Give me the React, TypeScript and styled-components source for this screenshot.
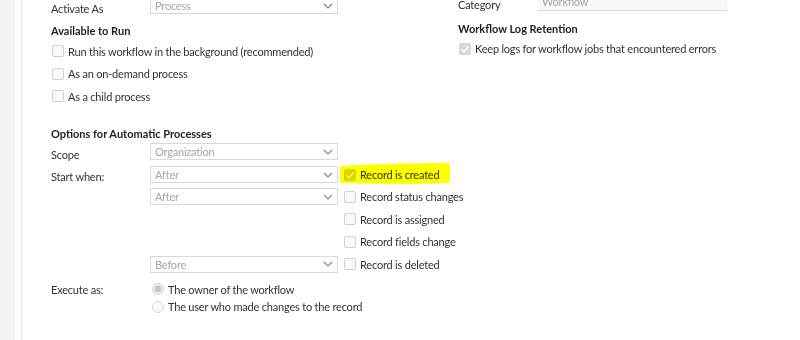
import React from 'react';
import styled, { createGlobalStyle } from 'styled-components';

const GlobalStyle = createGlobalStyle`
  html, body {
    margin: 0;
    padding: 0;
    background: #ffffff;
  }
  body {
    font-family: Lato, 'Open Sans', 'Liberation Sans', sans-serif;
    font-size: 11px;
    letter-spacing: -0.2px;
    color: #333333;
    white-space: nowrap;
    overflow: hidden;
  }
`;

const Chevron: React.FC = () => (
  <svg width="10" height="6" viewBox="0 0 10 6">
    <path d="M1 1 L5 5 L9 1" fill="none" stroke="#8a8a8a" strokeWidth="1.2" />
  </svg>
);

const Check: React.FC = () => (
  <svg width="10" height="10" viewBox="0 0 10 10">
    <path d="M1.5 5.2 L4 7.8 L8.7 2.2" fill="none" stroke="#ffffff" strokeWidth="1.6" />
  </svg>
);

const Select: React.FC<{ value: string }> = ({ value }) => (
  <SelectBox>
    <SelectValue>{value}</SelectValue>
    <Chevron />
  </SelectBox>
);

const CheckItem: React.FC<{ label: string; checked?: boolean }> = ({ label, checked = false }) => (
  <CheckRow>
    <Box checked={checked}>{checked && <Check />}</Box>
    <span>{label}</span>
  </CheckRow>
);

const RadioItem: React.FC<{ label: string; selected?: boolean }> = ({ label, selected = false }) => (
  <RadioRow>
    <Radio selected={selected} />
    <span>{label}</span>
  </RadioRow>
);

const App: React.FC = () => {
  return (
    <>
      <GlobalStyle />
      <Page>
        <Sidebar />
        <Main>
          <Columns>
            <LeftColumn>
              <FieldRow>
                <Label>Activate As</Label>
                <Select value="Process" />
              </FieldRow>
              <Heading top={6}>Available to Run</Heading>
              <CheckList>
                <CheckItem label="Run this workflow in the background (recommended)" />
                <CheckItem label="As an on-demand process" />
                <CheckItem label="As a child process" />
              </CheckList>

              <Heading top={22}>Options for Automatic Processes</Heading>
              <FieldRow top={1}>
                <Label>Scope</Label>
                <Select value="Organization" />
              </FieldRow>
              <StartGrid>
                <GridLabel row={1}>Start when:</GridLabel>
                <GridSelect row={1}>
                  <Select value="After" />
                </GridSelect>
                <GridSelect row={2}>
                  <Select value="After" />
                </GridSelect>
                <GridSelect row={5}>
                  <Select value="Before" />
                </GridSelect>
                <GridCheck row={1}>
                  <Highlight viewBox="0 0 112 22" width="112" height="22">
                    <path
                      d="M3 3 C30 1 80 0 109 0 Q111 0 111 3 L111 17 Q111 20 108 20 C80 21 40 21 3 20 Q1 20 1 17 L1 5 Q1 3 3 3 Z"
                      fill="#ffff00"
                    />
                  </Highlight>
                  <CheckItem label="Record is created" checked />
                </GridCheck>
                <GridCheck row={2}>
                  <CheckItem label="Record status changes" />
                </GridCheck>
                <GridCheck row={3}>
                  <CheckItem label="Record is assigned" />
                </GridCheck>
                <GridCheck row={4}>
                  <CheckItem label="Record fields change" />
                </GridCheck>
                <GridCheck row={5}>
                  <CheckItem label="Record is deleted" />
                </GridCheck>
              </StartGrid>

              <ExecuteRow>
                <ExecuteLabel>Execute as:</ExecuteLabel>
                <RadioList>
                  <RadioItem label="The owner of the workflow" selected />
                  <RadioItem label="The user who made changes to the record" />
                </RadioList>
              </ExecuteRow>
            </LeftColumn>

            <RightColumn>
              <FieldRow>
                <RightLabel>Category</RightLabel>
                <TextField>Workflow</TextField>
              </FieldRow>
              <Heading top={8}>Workflow Log Retention</Heading>
              <CheckList top={3.5}>
                <CheckItem label="Keep logs for workflow jobs that encountered errors" checked />
              </CheckList>
            </RightColumn>
          </Columns>
        </Main>
      </Page>
    </>
  );
};

export default App;

const Page = styled.div`
  display: flex;
  width: 800px;
  height: 340px;
  overflow: hidden;
`;

const Sidebar = styled.div`
  width: 15px;
  flex: none;
  background: #f3f3f3;
  margin-right: 6px;
`;

const Main = styled.div`
  flex: 1;
  border-left: 1px solid #e8e8e8;
  padding-left: 29px;
`;

const Columns = styled.div`
  display: flex;
  align-items: flex-start;
  margin-top: -3px;
`;

const LeftColumn = styled.div`
  width: 407px;
  flex: none;
  display: flex;
  flex-direction: column;
`;

const RightColumn = styled.div`
  width: 280px;
  display: flex;
  flex-direction: column;
  margin-top: -4px;
`;

const FieldRow = styled.div<{ top?: number }>`
  display: flex;
  align-items: flex-start;
  margin-top: ${({ top }) => top ?? 0}px;
`;

const Label = styled.div`
  width: 99px;
  flex: none;
  line-height: 16px;
  margin-top: 4px;
`;

const RightLabel = styled(Label)`
  width: 80px;
`;

const SelectBox = styled.div`
  box-sizing: border-box;
  width: 188px;
  height: 17px;
  border: 1px solid #d9d9d9;
  display: flex;
  align-items: center;
  justify-content: space-between;
  padding: 0 4px;
  background: #ffffff;
`;

const SelectValue = styled.span`
  color: #a6a6a6;
`;

const TextField = styled.div`
  box-sizing: border-box;
  width: 189px;
  height: 18px;
  border-bottom: 1px solid #dcdcdc;
  background: #f8f8f8;
  color: #a6a6a6;
  padding: 2px 0 0 4px;
  line-height: 14px;
`;

const Heading = styled.div<{ top: number }>`
  font-weight: 700;
  letter-spacing: 0;
  color: #1f1f1f;
  margin-top: ${({ top }) => top}px;
  line-height: 16px;
`;

const CheckList = styled.div<{ top?: number }>`
  display: flex;
  flex-direction: column;
  gap: 6.5px;
  margin-top: ${({ top }) => top ?? 4}px;
`;

const CheckRow = styled.div`
  position: relative;
  display: flex;
  align-items: center;
  gap: 4px;
  height: 16px;
  padding-left: 1px;
`;

const Box = styled.div<{ checked: boolean }>`
  box-sizing: border-box;
  width: 12px;
  height: 12px;
  flex: none;
  border-radius: 2px;
  border: 1px solid ${({ checked }) => (checked ? '#d6d6d6' : '#d0d0d0')};
  background: ${({ checked }) => (checked ? '#d8d8d8' : '#fafafa')};
  display: flex;
  align-items: center;
  justify-content: center;
`;

const StartGrid = styled.div`
  display: grid;
  grid-template-columns: 93px 188px auto;
  grid-template-rows: repeat(5, 17px);
  column-gap: 6px;
  row-gap: 5.4px;
  margin-top: 3px;
  align-items: center;
`;

const GridLabel = styled.div<{ row: number }>`
  grid-column: 1;
  grid-row: ${({ row }) => row};
  padding-top: 3px;
`;

const GridSelect = styled.div<{ row: number }>`
  grid-column: 2;
  grid-row: ${({ row }) => row};
`;

const GridCheck = styled.div<{ row: number }>`
  position: relative;
  grid-column: 3;
  grid-row: ${({ row }) => row};
  margin-left: -1px;
`;

const Highlight = styled.svg`
  position: absolute;
  left: -4px;
  top: -4px;
  mix-blend-mode: multiply;
  z-index: 2;
  pointer-events: none;
`;

const ExecuteRow = styled.div`
  display: flex;
  margin-top: 8.5px;
`;

const ExecuteLabel = styled.div`
  width: 101px;
  flex: none;
  line-height: 16px;
  padding-top: 1px;
`;

const RadioList = styled.div`
  display: flex;
  flex-direction: column;
  gap: 1.5px;
`;

const RadioRow = styled.div`
  display: flex;
  align-items: center;
  gap: 4px;
  height: 16px;
`;

const Radio = styled.div<{ selected: boolean }>`
  box-sizing: border-box;
  width: 12px;
  height: 12px;
  border-radius: 50%;
  border: 1px solid #d6d6d6;
  background: ${({ selected }) =>
    selected ? 'radial-gradient(circle, #c4c4c4 0 3px, #ececec 3.5px)' : '#fafafa'};
`;
